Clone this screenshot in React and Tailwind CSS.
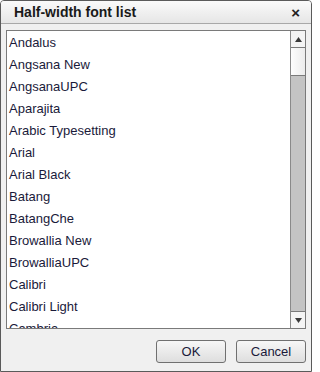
import React from "react";

const fonts = [
    "Andalus",
    "Angsana New",
    "AngsanaUPC",
    "Aparajita",
    "Arabic Typesetting",
    "Arial",
    "Arial Black",
    "Batang",
    "BatangChe",
    "Browallia New",
    "BrowalliaUPC",
    "Calibri",
    "Calibri Light",
    "Cambria",
];

const App = () => {
    return (
        <div className="w-[312px] h-[372px] bg-white" style={{ fontFamily: '"Liberation Sans", Arial, sans-serif' }}>
            <div className="flex flex-col w-full h-full border border-[#5a5a5a] rounded-t-[4px] bg-[#f0f0f0] overflow-hidden">
                {/* Title bar */}
                <div className="flex items-center justify-between h-[23px] px-[13px] border-b border-[#a8a8a8] bg-gradient-to-b from-[#fafafa] to-[#e6e6e6]">
                    <span className="text-[14px] font-bold text-[#1a1a1a] leading-none">Half-width font list</span>
                    <span className="text-[15px] font-bold text-[#222] leading-none mr-[-2px]">×</span>
                </div>

                {/* List box */}
                <div className="flex mx-[5px] mt-[6px] h-[299px] border border-[#7a7a7a] bg-white">
                    <div className="flex-1 overflow-hidden">
                        {fonts.map((f) => (
                            <div key={f} className="h-[22px] pl-[2px] pt-[4px] text-[13px] leading-[15px] text-[#1a1a3a] whitespace-nowrap">
                                {f}
                            </div>
                        ))}
                    </div>
                    {/* Scrollbar */}
                    <div className="flex flex-col w-[15px] border-l border-[#8a8a8a] bg-[#c4c4c4]">
                        <div className="flex items-center justify-center h-[17px] bg-[#f4f4f4] border-b border-[#7a7a7a]">
                            <svg width="7" height="5" viewBox="0 0 7 5"><path d="M3.5 0L7 5H0z" fill="#3a3a3a" /></svg>
                        </div>
                        <div className="h-[28px] bg-gradient-to-r from-[#fdfdfd] to-[#ececec] border-b border-[#7a7a7a]" />
                        <div className="flex-1" />
                        <div className="flex items-center justify-center h-[17px] bg-[#f4f4f4] border-t border-[#7a7a7a]">
                            <svg width="7" height="5" viewBox="0 0 7 5"><path d="M0 0H7L3.5 5z" fill="#3a3a3a" /></svg>
                        </div>
                    </div>
                </div>

                {/* Buttons */}
                <div className="flex justify-end gap-[10px] mt-[11px] mr-[5px]">
                    <button className="w-[70px] h-[23px] border border-[#707070] rounded-[3px] bg-gradient-to-b from-[#f7f7f7] to-[#dedede] text-[13px] text-[#1a1a3a] leading-none">
                        OK
                    </button>
                    <button className="w-[70px] h-[23px] border border-[#707070] rounded-[3px] bg-gradient-to-b from-[#f7f7f7] to-[#dedede] text-[13px] text-[#1a1a3a] leading-none">
                        Cancel
                    </button>
                </div>
            </div>
        </div>
    );
};

export default App;
